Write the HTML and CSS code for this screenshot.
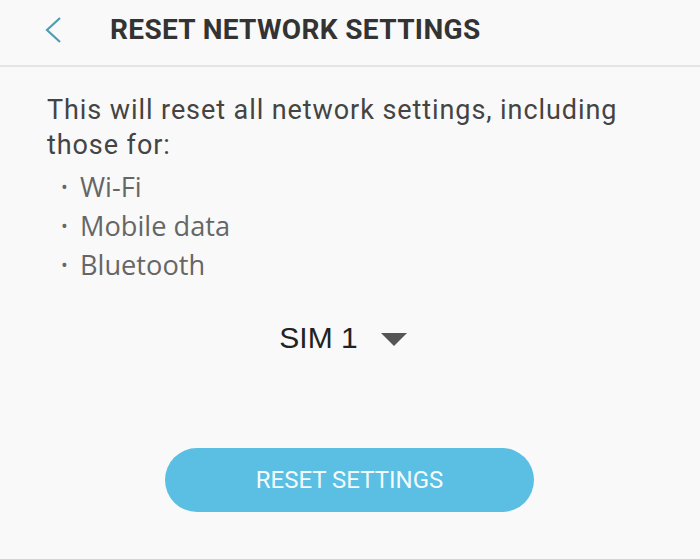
FILE: index.html
```
<!DOCTYPE html>
<html>
<head>
<meta charset="utf-8">
<link rel="stylesheet" href="styles.css">
</head>
<body>
<header class="header">
  <svg class="back" width="20" height="28" viewBox="0 0 20 28"><path d="M17 2 L4 14 L17 26" fill="none" stroke="#4d9db3" stroke-width="2.2"/></svg>
  <h1 class="title">RESET NETWORK SETTINGS</h1>
</header>
<main class="content">
  <p class="intro">This will reset all network settings, including those for:</p>
  <ul class="items">
    <li>Wi-Fi</li>
    <li>Mobile data</li>
    <li>Bluetooth</li>
  </ul>
  <div class="sim">
    <span class="sim-label">SIM 1</span>
    <svg class="caret" width="26" height="13" viewBox="0 0 26 13"><path d="M0 0 H26 L13 13 Z" fill="#555"/></svg>
  </div>
  <div class="actions">
    <button class="reset">RESET SETTINGS</button>
  </div>
</main>
</body>
</html>
```
FILE: styles.css
```
html, body {
  margin: 0;
  padding: 0;
  background: #f9f9f9;
  width: 700px;
  height: 559px;
  overflow: hidden;
  font-family: Roboto, "Liberation Sans", sans-serif;
}
.header {
  display: flex;
  align-items: center;
  box-sizing: border-box;
  height: 67px;
  border-bottom: 2px solid #e4e4e4;
}
.back {
  margin-left: 43px;
  margin-right: 47px;
  margin-top: -6px;
}
.title {
  margin: 0;
  margin-top: -6px;
  font-size: 28px;
  font-weight: 700;
  color: #333;
  letter-spacing: 0.35px;
}
.content {
  padding: 26px 0 0 47px;
}
.intro {
  margin: 0;
  font-size: 27px;
  line-height: 35px;
  letter-spacing: 0.92px;
  color: #444;
  width: 620px;
}
.items {
  list-style: none;
  margin: 4px 0 0 0;
  padding: 0 0 0 14px;
  font-family: "Open Sans", sans-serif;
  font-size: 27.2px;
  line-height: 39px;
  color: #666;
}
.items li {
  height: 39px;
}
.items li::before {
  content: "\2022";
  display: inline-block;
  width: 19px;
  font-size: 18px;
  line-height: 0;
  vertical-align: 3px;
}
.sim {
  display: flex;
  align-items: center;
  justify-content: center;
  gap: 23px;
  margin: 37px 0 0 -47px;
  padding-right: 14px;
}
.sim-label {
  font-family: "Liberation Sans", Arial, sans-serif;
  font-size: 30px;
  color: #222;
}
.caret {
  margin-top: 2px;
}
.actions {
  display: flex;
  justify-content: center;
  margin: 93px 0 0 -47px;
}
.reset {
  width: 369px;
  height: 64px;
  border: none;
  border-radius: 32px;
  background: #5bbfe3;
  color: #f4fbfe;
  font-family: Roboto, sans-serif;
  font-size: 24px;
  margin-right: 1px;
}
```
